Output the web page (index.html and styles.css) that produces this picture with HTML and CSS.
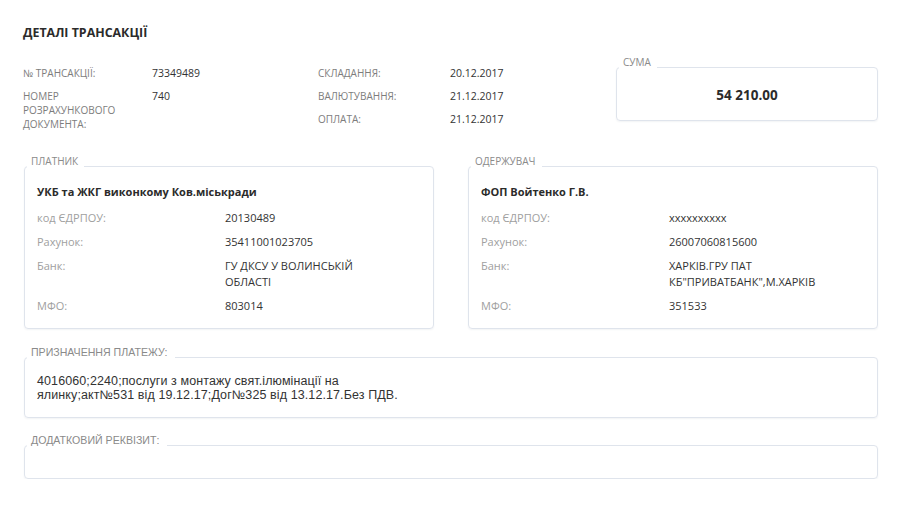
FILE: index.html
```html
<!DOCTYPE html>
<html lang="uk">
<head>
<meta charset="utf-8">
<title>Деталі трансакції</title>
<link rel="stylesheet" href="styles.css">
</head>
<body>
<div class="page">
  <h1 class="title">ДЕТАЛІ ТРАНСАКЦІЇ</h1>

  <div class="summary">
    <div class="info info-left">
      <div class="info-label">№ ТРАНСАКЦІЇ:</div>
      <div class="info-value">73349489</div>
      <div class="info-label">НОМЕР РОЗРАХУНКОВОГО ДОКУМЕНТА:</div>
      <div class="info-value">740</div>
    </div>
    <div class="info info-right">
      <div class="info-label">СКЛАДАННЯ:</div>
      <div class="info-value">20.12.2017</div>
      <div class="info-label">ВАЛЮТУВАННЯ:</div>
      <div class="info-value">21.12.2017</div>
      <div class="info-label">ОПЛАТА:</div>
      <div class="info-value">21.12.2017</div>
    </div>
    <fieldset class="box sum-box">
      <legend class="legend">СУМА</legend>
      <div class="sum-value">54 210.00</div>
    </fieldset>
  </div>

  <div class="parties">
    <fieldset class="box party">
      <legend class="legend">ПЛАТНИК</legend>
      <div class="party-name">УКБ та ЖКГ виконкому Ков.міськради</div>
      <div class="party-grid">
        <div class="p-label">код ЄДРПОУ:</div>
        <div class="p-value">20130489</div>
        <div class="p-label">Рахунок:</div>
        <div class="p-value">35411001023705</div>
        <div class="p-label">Банк:</div>
        <div class="p-value">ГУ ДКСУ У ВОЛИНСЬКІЙ ОБЛАСТІ</div>
        <div class="p-label">МФО:</div>
        <div class="p-value">803014</div>
      </div>
    </fieldset>
    <fieldset class="box party">
      <legend class="legend">ОДЕРЖУВАЧ</legend>
      <div class="party-name">ФОП Войтенко Г.В.</div>
      <div class="party-grid">
        <div class="p-label">код ЄДРПОУ:</div>
        <div class="p-value">xxxxxxxxxx</div>
        <div class="p-label">Рахунок:</div>
        <div class="p-value">26007060815600</div>
        <div class="p-label">Банк:</div>
        <div class="p-value">ХАРКІВ.ГРУ ПАТ КБ"ПРИВАТБАНК",М.ХАРКІВ</div>
        <div class="p-label">МФО:</div>
        <div class="p-value">351533</div>
      </div>
    </fieldset>
  </div>

  <fieldset class="box purpose">
    <legend class="legend legend-arial">ПРИЗНАЧЕННЯ ПЛАТЕЖУ:</legend>
    <div class="purpose-text">4016060;2240;послуги з монтажу свят.ілюмінації на ялинку;акт№531 від 19.12.17;Дог№325 від 13.12.17.Без ПДВ.</div>
  </fieldset>

  <fieldset class="box extra">
    <legend class="legend legend-arial">ДОДАТКОВИЙ РЕКВІЗИТ:</legend>
    <div class="extra-text"></div>
  </fieldset>
</div>
</body>
</html>
```

FILE: styles.css
```css
* {
  box-sizing: border-box;
}

html, body {
  margin: 0;
  background: #ffffff;
}

body {
  font-family: "Open Sans", "Noto Sans", sans-serif;
  color: #333333;
}

.page {
  padding: 24px 22px 0 23px;
}

.title {
  margin: 0;
  font-size: 12.4px;
  line-height: 18px;
  font-weight: 700;
  color: #2b2b2b;
}

.summary {
  display: flex;
  align-items: flex-start;
  margin-top: 14px;
}

.info {
  display: grid;
  row-gap: 9px;
  padding-top: 10px;
  align-content: start;
}

.info-left {
  width: 295px;
  grid-template-columns: 100px 1fr;
  column-gap: 29px;
}

.info-right {
  width: 298px;
  grid-template-columns: 110px 1fr;
  column-gap: 22px;
}

.info-label {
  font-size: 10px;
  line-height: 14px;
  color: #7d7d7d;
}

.info-value {
  font-size: 10.5px;
  line-height: 14px;
  color: #333333;
}

/* fieldset boxes */
.box {
  margin: 0;
  border: 1px solid #dfe4ec;
  border-radius: 4px;
  box-shadow: 0 1px 2px rgba(40, 60, 90, 0.06);
  padding: 7px 12px 14px 12px;
  min-width: 0;
}

.legend {
  margin-left: -10px;
  padding: 0 6px 10px 4px;
  font-size: 10px;
  line-height: 12px;
  color: #8a8a8a;
}

.legend-arial {
  font-family: "Liberation Sans", Arial, sans-serif;
  font-size: 10.6px;
  padding-right: 8px;
}

.sum-box {
  flex: 1;
  padding-top: 7px;
  padding-bottom: 15px;
}

.sum-value {
  text-align: center;
  font-size: 13.5px;
  line-height: 20px;
  font-weight: 700;
  color: #2b2b2b;
}

.parties {
  display: grid;
  grid-template-columns: 1fr 1fr;
  column-gap: 34px;
  margin-top: 24px;
  margin-left: 1px;
}

.party-name {
  font-size: 11px;
  line-height: 16px;
  font-weight: 700;
  color: #2b2b2b;
}

.party-grid {
  display: grid;
  grid-template-columns: 188px 170px;
  row-gap: 8px;
  margin-top: 10px;
}

.p-label {
  font-size: 11px;
  line-height: 16px;
  color: #a0a0a0;
}

.p-value {
  font-size: 11px;
  line-height: 16px;
  color: #333333;
}

.purpose {
  margin-top: 17px;
  margin-left: 1px;
  padding-top: 6px;
  padding-bottom: 15px;
}

.purpose-text {
  font-family: "Liberation Sans", Arial, sans-serif;
  font-size: 12.5px;
  letter-spacing: 0.1px;
  line-height: 14px;
  color: #333333;
  max-width: 384px;
}

.extra {
  margin-top: 16px;
  margin-left: 1px;
  padding-top: 0;
  padding-bottom: 0;
}

.extra-text {
  height: 22px;
}
```
